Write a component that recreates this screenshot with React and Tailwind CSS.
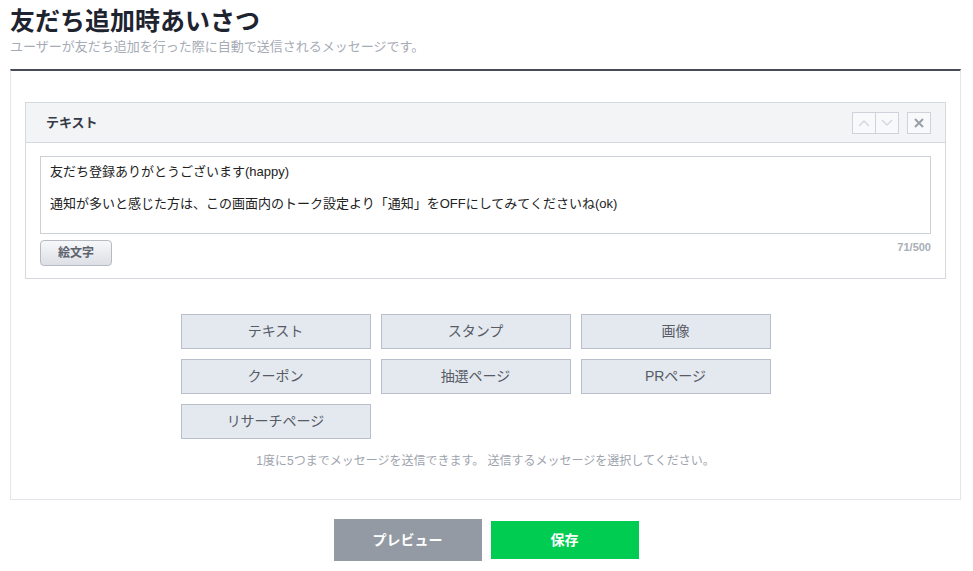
const font = { fontFamily: '"Liberation Sans", "Noto Sans CJK JP", sans-serif' };

const types = ['テキスト', 'スタンプ', '画像', 'クーポン', '抽選ページ', 'PRページ', 'リサーチページ'];

function Chevron({ up }) {
  return (
    <svg width="12" height="8" viewBox="0 0 12 8" fill="none" stroke="#d3d7dd" strokeWidth="1.4">
      {up ? <path d="M1 7 L6 2 L11 7" /> : <path d="M1 1 L6 6 L11 1" />}
    </svg>
  );
}

export default function App() {
  return (
    <div className="min-h-[571px] w-[973px] bg-white text-[#333]" style={font}>
      <div className="px-[10px] pr-[12px]">
        <h1 className="pt-[5px] text-[25px] font-bold leading-[32px] text-[#1e2330]">友だち追加時あいさつ</h1>
        <p className="mt-[1px] text-[13px] leading-[18px] text-[#a6abb5]">
          ユーザーが友だち追加を行った際に自動で送信されるメッセージです。
        </p>

        <div className="mt-[13px] border-t-2 border-t-[#474d57] border-x border-b border-x-[#e3e5ea] border-b-[#e3e5ea] px-[14px] pt-[31px] pb-[29px]">
          <div className="border border-[#d5d8dd]">
            <div className="flex h-[40px] items-center justify-between border-b border-[#d5d8dd] bg-[#f3f4f6] pl-[20px] pr-[14px]">
              <span className="text-[13px] font-bold text-[#333a45]">テキスト</span>
              <div className="flex items-center gap-[8px]">
                <div className="flex h-[22px] border border-[#cfd3d9] bg-[#f8f9fa]">
                  <button className="flex w-[23px] items-center justify-center border-r border-[#cfd3d9]">
                    <Chevron up />
                  </button>
                  <button className="flex w-[22px] items-center justify-center">
                    <Chevron />
                  </button>
                </div>
                <button className="flex h-[22px] w-[24px] items-center justify-center border border-[#cfd3d9] bg-[#f8f9fa]">
                  <svg width="10" height="10" viewBox="0 0 10 10" stroke="#9aa0a8" strokeWidth="2">
                    <path d="M1 1 L9 9 M9 1 L1 9" />
                  </svg>
                </button>
              </div>
            </div>
            <div className="px-[14px] pt-[13px] pb-[12px]">
              <div className="h-[78px] border border-[#ccd1d8] px-[9px] pt-[7px] text-[13px] leading-[16px] text-[#222]">
                <p>友だち登録ありがとうございます(happy)</p>
                <p className="mt-[16px]">通知が多いと感じた方は、この画面内のトーク設定より「通知」をOFFにしてみてくださいね(ok)</p>
              </div>
              <div className="mt-[6px] flex items-start justify-between">
                <button className="h-[26px] w-[72px] rounded-[4px] border border-[#b5bac3] bg-gradient-to-b from-[#f7f8fa] to-[#dcdfe5] text-[12px] font-bold text-[#5d636d]">
                  絵文字
                </button>
                <span className="text-[11px] font-bold leading-[14px] text-[#a9aeb6]">71/500</span>
              </div>
            </div>
          </div>

          <div className="mx-auto mt-[35px] grid w-[610px] grid-cols-[190px_190px_190px] gap-[10px]">
            {types.map((t) => (
              <button
                key={t}
                className="h-[35px] border border-[#b9bfca] bg-[#e4e8ef] text-[14px] text-[#565b65]"
              >
                {t}
              </button>
            ))}
          </div>

          <p className="mt-[13px] text-center text-[12px] leading-[18px] text-[#9ea4ae]">
            1度に5つまでメッセージを送信できます。 送信するメッセージを選択してください。
          </p>
        </div>

        <div className="mt-[19px] flex items-center justify-center gap-[9px] pl-[1px]">
          <button className="h-[42px] w-[148px] bg-[#939aa3] text-[14px] font-bold text-white">プレビュー</button>
          <button className="h-[38px] w-[148px] bg-[#00cc52] text-[14px] font-bold text-white">保存</button>
        </div>
      </div>
    </div>
  );
}
